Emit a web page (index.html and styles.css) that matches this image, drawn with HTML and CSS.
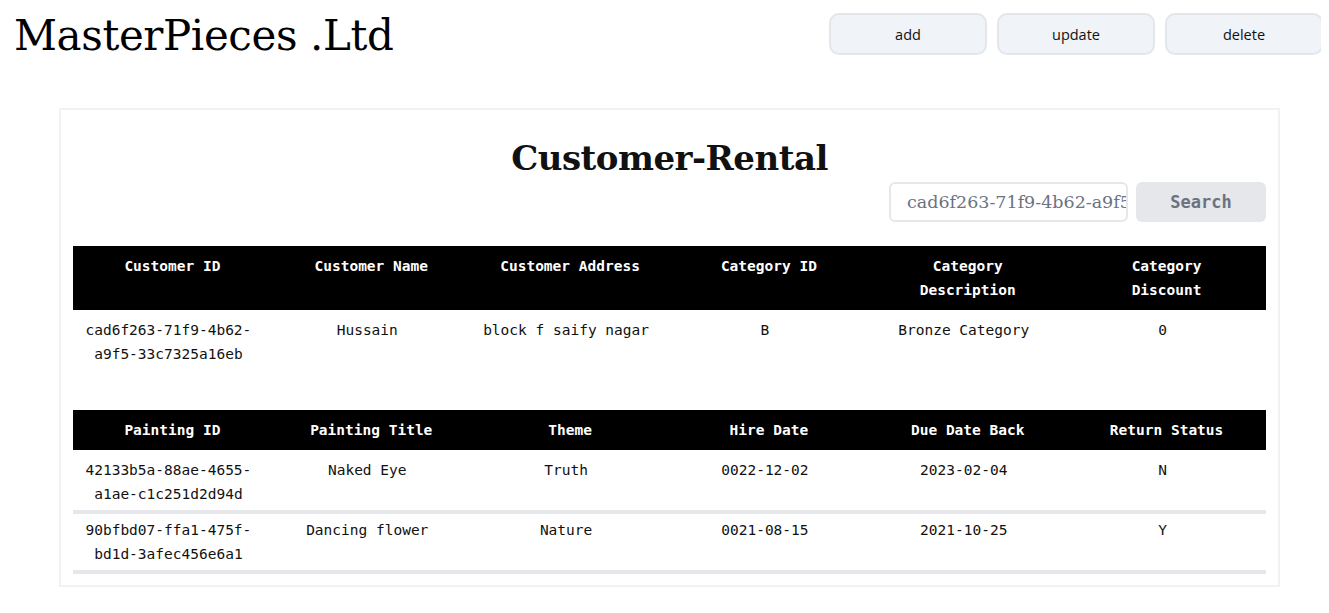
FILE: index.html
```html
<!DOCTYPE html>
<html>
<head>
<meta charset="utf-8">
<link rel="stylesheet" href="styles.css">
</head>
<body>
<header class="topbar">
  <h1 class="brand">MasterPieces .Ltd</h1>
  <div class="actions">
    <button class="action-btn">add</button>
    <button class="action-btn">update</button>
    <button class="action-btn">delete</button>
  </div>
</header>
<main class="card">
  <h2 class="card-title">Customer-Rental</h2>
  <div class="search-row">
    <input class="search-input" type="text" value="cad6f263-71f9-4b62-a9f5-33c7325a16eb">
    <button class="search-btn">Search</button>
  </div>
  <table class="data-table">
    <thead>
      <tr>
        <th>Customer ID</th>
        <th>Customer Name</th>
        <th>Customer Address</th>
        <th>Category ID</th>
        <th>Category Description</th>
        <th>Category Discount</th>
      </tr>
    </thead>
    <tbody>
      <tr class="plain-row">
        <td>cad6f263-71f9-4b62-a9f5-33c7325a16eb</td>
        <td>Hussain</td>
        <td>block f saify nagar</td>
        <td>B</td>
        <td>Bronze Category</td>
        <td>0</td>
      </tr>
    </tbody>
  </table>
  <table class="data-table rentals">
    <thead>
      <tr>
        <th>Painting ID</th>
        <th>Painting Title</th>
        <th>Theme</th>
        <th>Hire Date</th>
        <th>Due Date Back</th>
        <th>Return Status</th>
      </tr>
    </thead>
    <tbody>
      <tr class="first">
        <td>42133b5a-88ae-4655-a1ae-c1c251d2d94d</td>
        <td>Naked Eye</td>
        <td>Truth</td>
        <td>0022-12-02</td>
        <td>2023-02-04</td>
        <td>N</td>
      </tr>
      <tr>
        <td>90bfbd07-ffa1-475f-bd1d-3afec456e6a1</td>
        <td>Dancing flower</td>
        <td>Nature</td>
        <td>0021-08-15</td>
        <td>2021-10-25</td>
        <td>Y</td>
      </tr>
    </tbody>
  </table>
</main>
</body>
</html>
```
FILE: styles.css
```css
body {
  margin: 8px;
  background: #ffffff;
  color: #111111;
  font-family: "DejaVu Serif", Georgia, serif;
}

.topbar {
  display: flex;
  justify-content: space-between;
  align-items: flex-start;
  height: 56px;
  padding: 0 0 0 6px;
  margin-right: -2px;
}

.brand {
  margin: 0;
  font-family: "DejaVu Serif", serif;
  font-weight: normal;
  font-size: 42px;
  line-height: 56px;
  color: #000;
  letter-spacing: -0.4px;
}

.actions {
  display: flex;
  gap: 10px;
  margin-top: 5px;
}

.action-btn {
  box-sizing: border-box;
  width: 158px;
  height: 42px;
  background: #f0f3f7;
  border: 2px solid #e3e6eb;
  border-radius: 10px;
  font-family: "Open Sans", "Noto Sans", sans-serif;
  font-size: 14.5px;
  color: #111;
  padding: 0;
}

.card {
  margin: 44px 41px 0 51px;
  border: 2px solid #f2f2f2;
  padding: 12px 12px 11px 12px;
}

.card-title {
  margin: 13px 0 1px 0;
  text-align: center;
  font-family: "DejaVu Serif", serif;
  font-weight: bold;
  font-size: 34px;
  line-height: 46px;
  color: #111;
  letter-spacing: -0.5px;
}

.search-row {
  display: flex;
  justify-content: flex-end;
  gap: 8px;
  margin-bottom: 24px;
}

.search-input {
  box-sizing: border-box;
  width: 239px;
  height: 40px;
  border: 2px solid #e5e7eb;
  border-radius: 6px;
  padding: 0 0 0 16px;
  font-family: "DejaVu Serif", serif;
  font-size: 17.5px;
  color: #6b7280;
  outline: none;
}

.search-btn {
  width: 130px;
  height: 40px;
  border: none;
  border-radius: 6px;
  background: #e5e7eb;
  color: #6b7280;
  font-family: "DejaVu Sans Mono", monospace;
  font-weight: bold;
  font-size: 17px;
  padding: 0;
}

.data-table {
  width: 100%;
  border-collapse: collapse;
  table-layout: fixed;
  font-family: "DejaVu Sans Mono", "Liberation Mono", monospace;
  font-size: 14.5px;
  line-height: 24px;
}

.data-table th {
  background: #000;
  color: #fff;
  font-weight: bold;
  padding: 8px 27px;
  vertical-align: top;
}

.data-table td {
  text-align: center;
  vertical-align: top;
  padding: 8px 20px 4px 12px;
  color: #111;
}

.rentals {
  margin-top: 40px;
}

.rentals td {
  padding: 4px 20px 4px 12px;
}

.rentals tr.first td {
  padding-top: 8px;
}

.rentals tbody tr {
  border-bottom: 4px solid #e5e7eb;
}
```
